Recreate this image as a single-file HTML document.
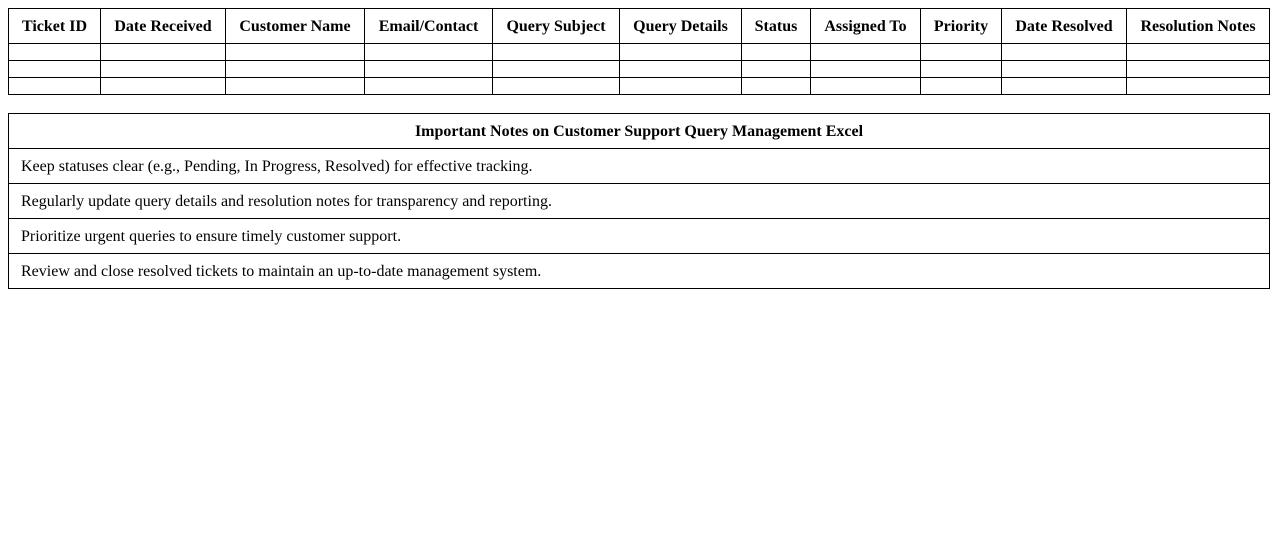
<!DOCTYPE html>
<html><head><style>
body{margin:0;background:#fff;font-family:"Liberation Serif",serif;color:#000}
table{border-collapse:collapse;position:absolute;table-layout:fixed}
td,th{border:1px solid #000;padding:0}
#t1{left:8px;top:8px;width:1261px}
#t1 th{height:34px;font-size:16px;font-weight:bold;text-align:center;padding-top:2px;height:32px}
#t1 td{height:16px}
#t2{left:8px;top:113px;width:1262px}
#t2 th{height:32px;padding-top:2px;font-size:16px;font-weight:bold}
#t2 td{height:32px;padding-top:2px;font-size:16px;padding-left:12px}
</style></head><body>
<table id="t1">
<colgroup><col style="width:92px"><col style="width:125px"><col style="width:139px"><col style="width:128px"><col style="width:127px"><col style="width:122px"><col style="width:69px"><col style="width:110px"><col style="width:81px"><col style="width:125px"><col style="width:143px"></colgroup>
<tr><th>Ticket ID</th><th>Date Received</th><th>Customer Name</th><th>Email/Contact</th><th>Query Subject</th><th>Query Details</th><th>Status</th><th>Assigned To</th><th>Priority</th><th>Date Resolved</th><th>Resolution Notes</th></tr>
<tr><td></td><td></td><td></td><td></td><td></td><td></td><td></td><td></td><td></td><td></td><td></td></tr>
<tr><td></td><td></td><td></td><td></td><td></td><td></td><td></td><td></td><td></td><td></td><td></td></tr>
<tr><td></td><td></td><td></td><td></td><td></td><td></td><td></td><td></td><td></td><td></td><td></td></tr>
</table>
<table id="t2">
<tr><th>Important Notes on Customer Support Query Management Excel</th></tr>
<tr><td>Keep statuses clear (e.g., Pending, In Progress, Resolved) for effective tracking.</td></tr>
<tr><td>Regularly update query details and resolution notes for transparency and reporting.</td></tr>
<tr><td>Prioritize urgent queries to ensure timely customer support.</td></tr>
<tr><td>Review and close resolved tickets to maintain an up-to-date management system.</td></tr>
</table>
</body></html>
